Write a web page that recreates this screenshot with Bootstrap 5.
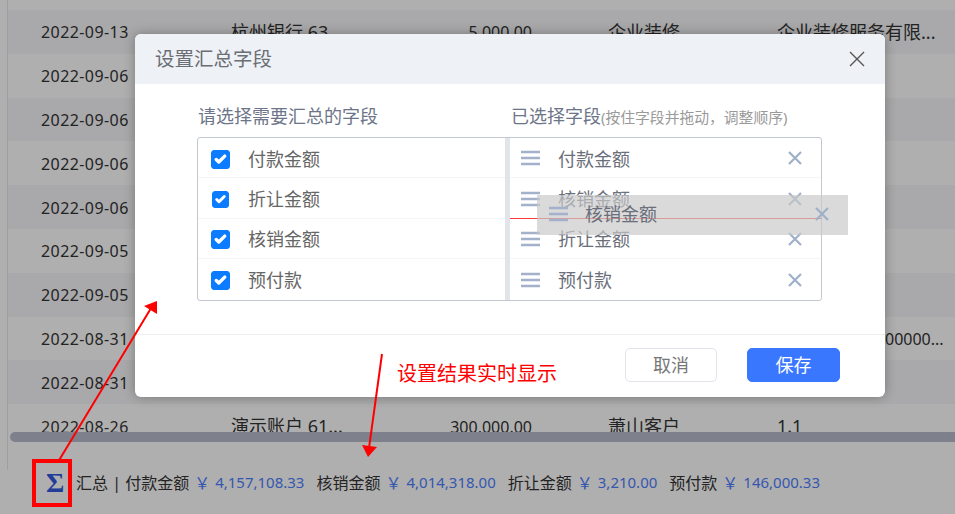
<!DOCTYPE html>
<html lang="zh">
<head>
<meta charset="utf-8">
<link href="https://cdn.jsdelivr.net/npm/bootstrap@5.3.0/dist/css/bootstrap.min.css" rel="stylesheet">
<style>
html,body{height:100%;}
body{width:955px;height:514px;overflow:hidden;background:#fff;font-family:"Noto Sans","Noto Sans CJK SC",sans-serif;font-size:16px;color:#333;position:relative;}
.gridwrap{height:432px;overflow:hidden;padding-top:10px;margin-left:8px;}
.gridwrap::before{content:"";position:absolute;left:7px;top:0;height:470px;width:1px;background:#e8e8e8;}
.rowline{height:43.8px;padding-top:1px;}
.rowline:nth-child(odd){background:#f6f6f9;}
.rowline>div{white-space:nowrap;flex:none;}
.cell-date{margin-left:33px;width:190px;letter-spacing:.42px;}
.cell-acc{width:120px;font-size:18px;}
.cell-amt{width:181px;text-align:right;}
.cell-cat{margin-left:76px;width:169px;font-size:18px;}
.cell-co{width:108px;font-size:18px;}
.hscroll{height:10px;background:#b8bbcc;margin-left:10px;border-radius:5px 0 0 5px;}
.sumbar{padding-left:46px;height:62px;padding-top:19px;white-space:nowrap;}
.sigma{font-family:"Liberation Serif",serif;font-size:28px;font-weight:700;color:#3258e0;width:30px;line-height:1;}
.amt{color:#4e7fff;font-size:15px;}
.yen{color:#4e7fff;margin-left:5px;margin-right:5px;font-size:16px;}
.sumitem{margin-right:12px;}
.shade{position:absolute;inset:0;background:rgba(0,0,0,.315);}
.dlg{position:absolute;left:135px;top:34px;width:750px;height:363px;border:0;border-radius:6px;box-shadow:0 0 12px rgba(0,0,0,.3);overflow:hidden;background:#fff;}
.dlg .modal-header{height:50px;background:#eef1f5;padding:0 20px;border:0;border-radius:0;}
.dlg-title{font-size:19.5px;color:#6a6e75;}
.dlg-x{width:16px;height:16px;display:block;background:none;border:0;padding:0;}
.dlg-x svg{display:block;}
.dlg .modal-body{padding:20px 63px 0 62px;height:250px;flex:none;}
.heads{height:33px;color:#6d7589;font-size:18px;line-height:24px;}
.head-a{width:314px;padding-left:1px;}
.head-sub{font-size:14.8px;color:#9a9a9a;}
.pick{width:625px;height:164px;border:1px solid #c2c7d0;border-radius:3px;font-size:18px;}
.pane-a{width:312px;border-right:5px solid #e1e4e8;}
.pane-b{width:311px;}
.opt{height:40.4px;border-bottom:1px solid #f4f5f7;color:#666;padding-left:13px;padding-top:3px;}
.opt:last-child{border-bottom:0;}
.opt .form-check-input{width:19px;height:19px;margin:0 18px 0 0;border-radius:3px;background-color:#0b7cff;border-color:#0b7cff;flex:none;background-image:url("data:image/svg+xml,%3csvg xmlns='http://www.w3.org/2000/svg' viewBox='0 0 20 20'%3e%3cpath fill='none' stroke='%23fff' stroke-linecap='round' stroke-linejoin='round' stroke-width='4' d='m5 10 3 3 7-7'/%3e%3c/svg%3e");}
.opt .small-check{width:17px;height:17px;margin-left:1px;margin-right:19px;}
.sel{height:40.4px;border-bottom:1px solid #f4f5f7;color:#6a6f7b;padding-left:11px;padding-right:19px;padding-top:1px;}
.sel:last-child{border-bottom:0;}
.sel-name{margin-left:18px;padding-top:2px;}
.ghost{position:absolute;left:537px;top:195px;width:311px;height:40px;background:rgba(200,200,200,.68);padding:0 19px 2px 12px;color:#6a6f7b;font-size:18px;}
.ghost .sel-name{margin-left:17px;padding-top:0;}
.dropline{position:absolute;left:510px;top:218px;width:312px;height:1px;background:#ff3b3b;}
.dlg .modal-footer{height:63px;border-top:1px solid #edeef1;padding:13px 45px 0 0;align-items:flex-start;border-radius:0;gap:30px;flex-wrap:nowrap;}
.dlg .modal-footer .btn{margin:0;height:34px;padding:0;font-size:18px;border-radius:5px;width:92px;line-height:30px;}
.btn-esc{background:#fff;border:1px solid #e1e4ea;color:#777;}
.btn-keep{background:#3a77ff;border:1px solid #3a77ff;color:#fff;width:93px!important;}
.notes{position:absolute;left:0;top:0;width:955px;height:514px;}
.note-text{position:absolute;left:397px;top:361px;color:#f00;font-size:20px;line-height:26px;}
</style>
</head>
<body>
<div class="gridwrap"></div>
<script>
const rows=[["2022-09-13","杭州银行 63","5,000.00","企业装修","企业装修服务有限..."],["2022-09-06","","","",""],["2022-09-06","","","",""],["2022-09-06","","","",""],["2022-09-06","","","",""],["2022-09-05","","","",""],["2022-09-05","","","",""],["2022-08-31","","","","","00000..."],["2022-08-31","","","",""],["2022-08-26","演示账户 61...","300,000.00","萧山客户","1.1"]];
document.querySelector('.gridwrap').innerHTML=rows.map(r=>`<div class="rowline d-flex align-items-center"><div class="cell-date">${r[0]}</div><div class="cell-acc">${r[1]}</div><div class="cell-amt">${r[2]}</div><div class="cell-cat">${r[3]}</div><div class="cell-co">${r[4]}</div>${r[5]?`<div class="cell-end">${r[5]}</div>`:''}</div>`).join('');
</script>
<div class="hscroll"></div>
<div class="sumbar d-flex align-items-center">
  <div class="sigma">Σ</div>
  <div>汇总 | 付款金额</div><span class="yen">￥</span><span class="amt sumitem">4,157,108.33</span>
  <div>核销金额</div><span class="yen">￥</span><span class="amt sumitem">4,014,318.00</span>
  <div>折让金额</div><span class="yen">￥</span><span class="amt sumitem">3,210.00</span>
  <div>预付款</div><span class="yen">￥</span><span class="amt">146,000.33</span>
</div>
<div class="shade"></div>
<div class="modal-content dlg">
  <div class="modal-header d-flex justify-content-between align-items-center">
    <div class="dlg-title">设置汇总字段</div>
    <button type="button" class="dlg-x" aria-label="关闭"><svg width="16" height="16" viewBox="0 0 16 16"><path d="M1 1L15 15M15 1L1 15" stroke="#555" stroke-width="1.4" fill="none"/></svg></button>
  </div>
  <div class="modal-body">
    <div class="heads d-flex">
      <div class="head-a">请选择需要汇总的字段</div>
      <div>已选择字段<span class="head-sub">(按住字段并拖动，调整顺序)</span></div>
    </div>
    <div class="pick d-flex">
      <div class="pane-a">
        <div class="opt d-flex align-items-center"><input class="form-check-input" type="checkbox" checked aria-label="付款金额">付款金额</div>
        <div class="opt d-flex align-items-center"><input class="form-check-input small-check" type="checkbox" checked aria-label="折让金额">折让金额</div>
        <div class="opt d-flex align-items-center"><input class="form-check-input" type="checkbox" checked aria-label="核销金额">核销金额</div>
        <div class="opt d-flex align-items-center"><input class="form-check-input" type="checkbox" checked aria-label="预付款">预付款</div>
      </div>
      <div class="pane-b">
        <div class="sel d-flex align-items-center"><svg width="19" height="16" viewBox="0 0 19 16"><path d="M0 2H19M0 8H19M0 14H19" stroke="#a3b2ca" stroke-width="2.6"/></svg><span class="sel-name flex-grow-1">付款金额</span><svg width="14" height="14" viewBox="0 0 14 14"><path d="M1 1L13 13M13 1L1 13" stroke="#9fb0c9" stroke-width="2.2"/></svg></div>
        <div class="sel d-flex align-items-center"><svg width="19" height="16" viewBox="0 0 19 16"><path d="M0 2H19M0 8H19M0 14H19" stroke="#a3b2ca" stroke-width="2.6"/></svg><span class="sel-name flex-grow-1">核销金额</span><svg width="14" height="14" viewBox="0 0 14 14"><path d="M1 1L13 13M13 1L1 13" stroke="#9fb0c9" stroke-width="2.2"/></svg></div>
        <div class="sel d-flex align-items-center"><svg width="19" height="16" viewBox="0 0 19 16"><path d="M0 2H19M0 8H19M0 14H19" stroke="#a3b2ca" stroke-width="2.6"/></svg><span class="sel-name flex-grow-1">折让金额</span><svg width="14" height="14" viewBox="0 0 14 14"><path d="M1 1L13 13M13 1L1 13" stroke="#9fb0c9" stroke-width="2.2"/></svg></div>
        <div class="sel d-flex align-items-center"><svg width="19" height="16" viewBox="0 0 19 16"><path d="M0 2H19M0 8H19M0 14H19" stroke="#a3b2ca" stroke-width="2.6"/></svg><span class="sel-name flex-grow-1">预付款</span><svg width="14" height="14" viewBox="0 0 14 14"><path d="M1 1L13 13M13 1L1 13" stroke="#9fb0c9" stroke-width="2.2"/></svg></div>
      </div>
    </div>
  </div>
  <div class="modal-footer">
    <button type="button" class="btn btn-esc">取消</button>
    <button type="button" class="btn btn-keep">保存</button>
  </div>
</div>
<div class="dropline"></div>
<div class="ghost d-flex align-items-center"><svg width="19" height="16" viewBox="0 0 19 16"><path d="M0 2H19M0 8H19M0 14H19" stroke="#a3b2ca" stroke-width="2.6"/></svg><span class="sel-name flex-grow-1">核销金额</span><svg width="14" height="14" viewBox="0 0 14 14"><path d="M1 1L13 13M13 1L1 13" stroke="#9fb0c9" stroke-width="2.2"/></svg></div>
<svg class="notes" viewBox="0 0 955 514">
  <rect x="34" y="461" width="36" height="44" fill="none" stroke="#f00" stroke-width="4"/>
  <path d="M58 462L150.5 309" stroke="#f00" stroke-width="2" fill="none"/>
  <path d="M157 301L144 306L157 314Z" fill="#f00"/>
  <path d="M382 354L369 448" stroke="#f00" stroke-width="2" fill="none"/>
  <path d="M368 457L362 445L377 447Z" fill="#f00"/>
</svg>
<div class="note-text">设置结果实时显示</div>
<script src="https://cdn.jsdelivr.net/npm/bootstrap@5.3.0/dist/js/bootstrap.bundle.min.js"></script>
</body>
</html>
